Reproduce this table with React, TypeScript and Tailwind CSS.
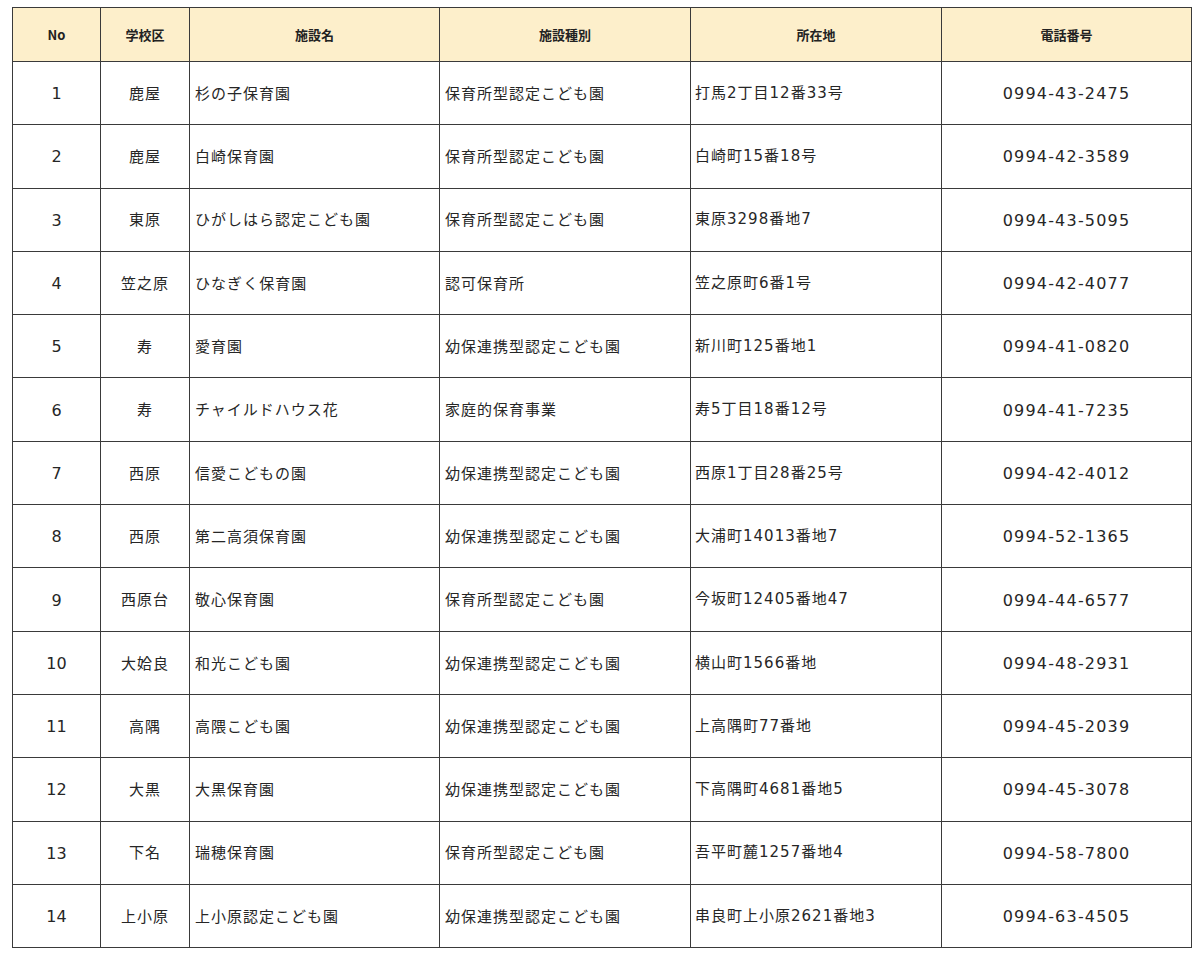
import React from "react";

const rows: [string, string, string, string, string, string][] = [
  ["1", "鹿屋", "杉の子保育園", "保育所型認定こども園", "打馬2丁目12番33号", "0994-43-2475"],
  ["2", "鹿屋", "白崎保育園", "保育所型認定こども園", "白崎町15番18号", "0994-42-3589"],
  ["3", "東原", "ひがしはら認定こども園", "保育所型認定こども園", "東原3298番地7", "0994-43-5095"],
  ["4", "笠之原", "ひなぎく保育園", "認可保育所", "笠之原町6番1号", "0994-42-4077"],
  ["5", "寿", "愛育園", "幼保連携型認定こども園", "新川町125番地1", "0994-41-0820"],
  ["6", "寿", "チャイルドハウス花", "家庭的保育事業", "寿5丁目18番12号", "0994-41-7235"],
  ["7", "西原", "信愛こどもの園", "幼保連携型認定こども園", "西原1丁目28番25号", "0994-42-4012"],
  ["8", "西原", "第二高須保育園", "幼保連携型認定こども園", "大浦町14013番地7", "0994-52-1365"],
  ["9", "西原台", "敬心保育園", "保育所型認定こども園", "今坂町12405番地47", "0994-44-6577"],
  ["10", "大姶良", "和光こども園", "幼保連携型認定こども園", "横山町1566番地", "0994-48-2931"],
  ["11", "高隅", "高隈こども園", "幼保連携型認定こども園", "上高隅町77番地", "0994-45-2039"],
  ["12", "大黒", "大黒保育園", "幼保連携型認定こども園", "下高隅町4681番地5", "0994-45-3078"],
  ["13", "下名", "瑞穂保育園", "保育所型認定こども園", "吾平町麓1257番地4", "0994-58-7800"],
  ["14", "上小原", "上小原認定こども園", "幼保連携型認定こども園", "串良町上小原2621番地3", "0994-63-4505"],
];

const headers = ["No", "学校区", "施設名", "施設種別", "所在地", "電話番号"];

const digitFont = { fontFamily: '"DejaVu Sans", "Noto Sans CJK JP", sans-serif' };

export default function App() {
  return (
    <div
      className="w-[1200px] h-[956px] bg-white pt-[7px] pl-[12px] text-[#262626]"
      style={{ fontFamily: '"Noto Sans CJK JP", "Noto Sans", sans-serif' }}
    >
      <div className="grid w-[1180px] grid-cols-[88px_89px_250px_251px_251px_250px] border-l border-t border-[#3a3a3a]">
        {headers.map((h) => (
          <div
            key={h}
            className="flex h-[54px] items-center justify-center border-b border-r border-[#3a3a3a] bg-[#fdefcb] text-[13px] font-bold text-[#222]"
          >
            {h}
          </div>
        ))}
        {rows.map((r) => (
          <React.Fragment key={r[0]}>
            <div
              className="flex h-[63.3px] items-center justify-center border-b border-r border-[#3a3a3a] pt-[2px] text-[16px]"
              style={digitFont}
            >
              {r[0]}
            </div>
            <div className="flex h-[63.3px] items-center justify-center border-b border-r border-[#3a3a3a] text-[15px] tracking-[1px]">
              {r[1]}
            </div>
            <div className="flex h-[63.3px] items-center border-b border-r border-[#3a3a3a] pl-[5px] text-[15px] tracking-[1px]">
              {r[2]}
            </div>
            <div className="flex h-[63.3px] items-center border-b border-r border-[#3a3a3a] pl-[5px] text-[15px] tracking-[1px]">
              {r[3]}
            </div>
            <div
              className="flex h-[63.3px] items-center border-b border-r border-[#3a3a3a] pl-[4px] text-[15px] tracking-[1px]"
              style={digitFont}
            >
              {r[4]}
            </div>
            <div
              className="flex h-[63.3px] items-center justify-center border-b border-r border-[#3a3a3a] pt-[2px] text-[16px] tracking-[1.2px]"
              style={digitFont}
            >
              {r[5]}
            </div>
          </React.Fragment>
        ))}
      </div>
    </div>
  );
}
